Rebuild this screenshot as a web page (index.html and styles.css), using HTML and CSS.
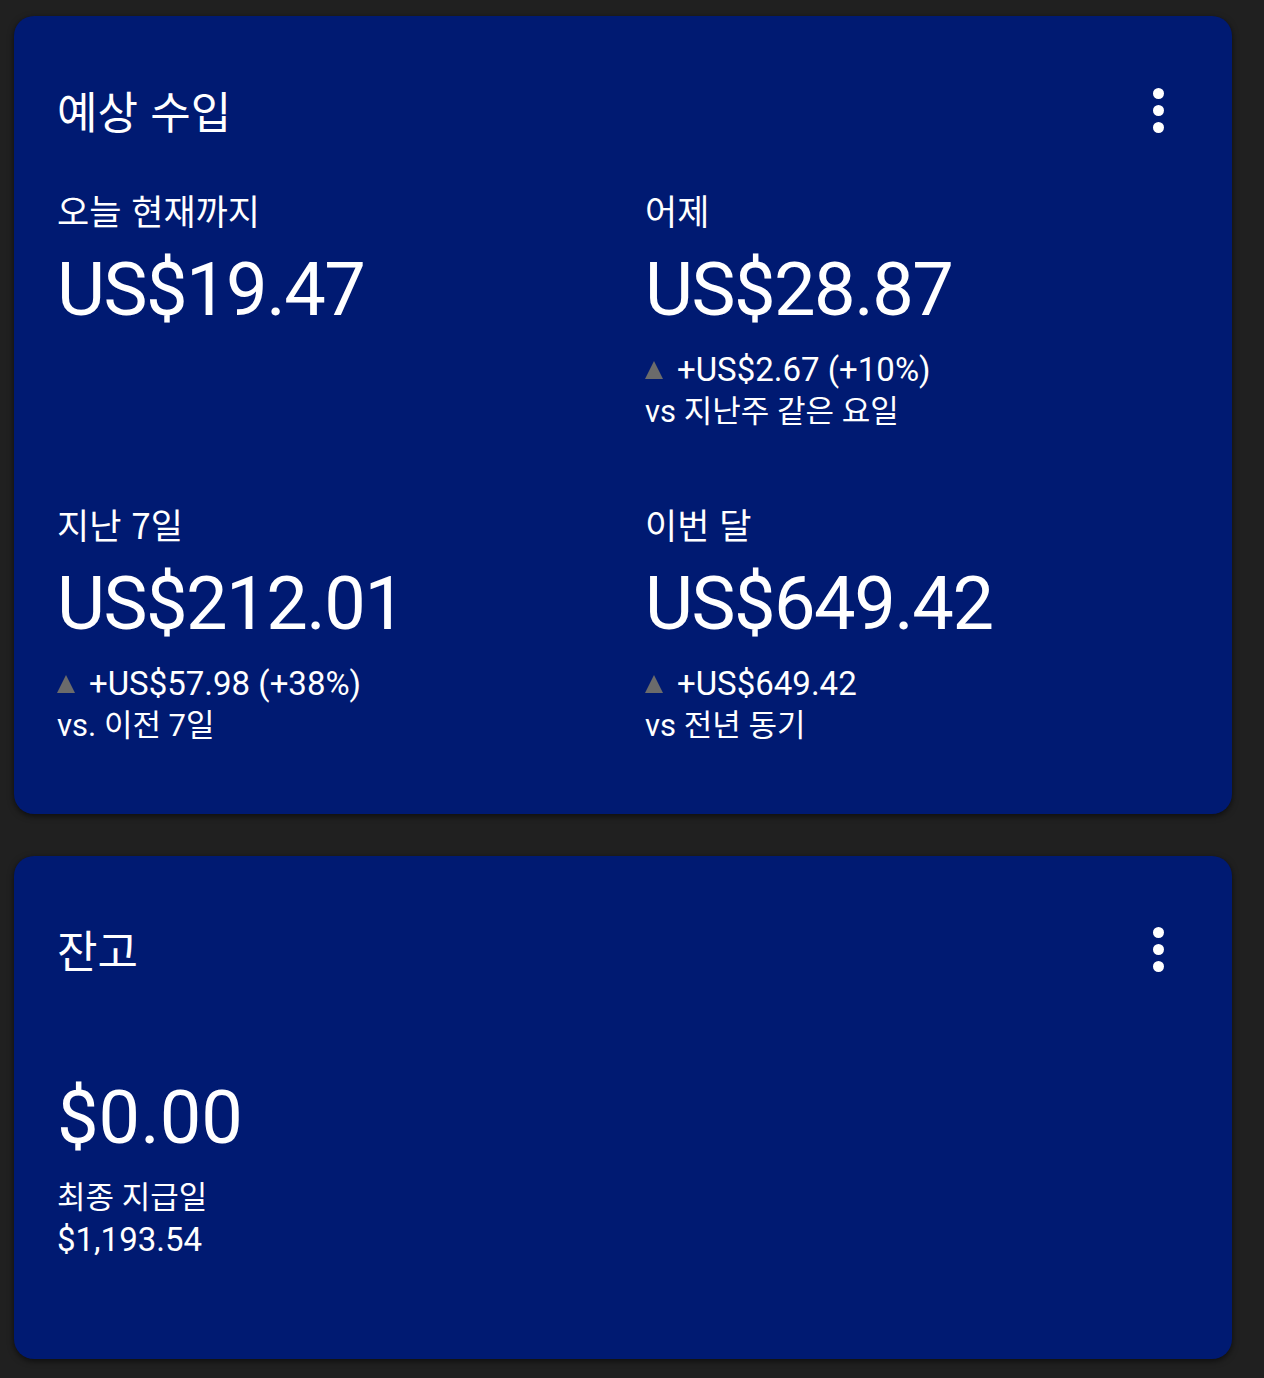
FILE: index.html
```html
<!DOCTYPE html>
<html lang="ko">
<head>
  <meta charset="UTF-8" />
  <meta name="viewport" content="width=device-width, initial-scale=1.0" />
  <title>수입</title>
  <link rel="stylesheet" href="styles.css">
</head>
<body>
  <div class="card">
    <div class="card-header">
      <h2>예상 수입</h2>
      <div class="more"><span></span><span></span><span></span></div>
    </div>
    <div class="stats">
      <div class="stat">
        <div class="label">오늘 현재까지</div>
        <div class="amount">US$19.47</div>
      </div>
      <div class="stat">
        <div class="label">어제</div>
        <div class="amount">US$28.87</div>
        <div class="change"><span class="up"></span>+US$2.67 (+10%)</div>
        <div class="compare">vs 지난주 같은 요일</div>
      </div>
      <div class="stat">
        <div class="label">지난 7일</div>
        <div class="amount">US$212.01</div>
        <div class="change"><span class="up"></span>+US$57.98 (+38%)</div>
        <div class="compare">vs. 이전 7일</div>
      </div>
      <div class="stat">
        <div class="label">이번 달</div>
        <div class="amount">US$649.42</div>
        <div class="change"><span class="up"></span>+US$649.42</div>
        <div class="compare">vs 전년 동기</div>
      </div>
    </div>
  </div>

  <div class="card balance">
    <div class="card-header">
      <h2>잔고</h2>
      <div class="more"><span></span><span></span><span></span></div>
    </div>
    <div class="amount">$0.00</div>
    <div class="compare">최종 지급일</div>
    <div class="paid">$1,193.54</div>
  </div>
</body>
</html>
```

FILE: styles.css
```css
* {
  box-sizing: border-box;
}

body {
  margin: 0;
  padding: 16px 32px 0 14px;
  background-color: #202020;
  font-family: Roboto, "Noto Sans CJK KR", sans-serif;
  color: #ffffff;
}

.card {
  background-color: #001a72;
  border-radius: 20px;
  padding: 64px 43px 67px 43px;
  box-shadow: 0 2px 6px rgba(0, 0, 0, 0.6);
  margin-bottom: 42px;
}

.card-header {
  display: flex;
  justify-content: space-between;
  align-items: center;
}

.card-header h2 {
  margin: 0;
  font-family: "Noto Sans CJK KR", sans-serif;
  font-size: 44px;
  font-weight: 400;
  line-height: 60px;
}

.more {
  display: flex;
  flex-direction: column;
  align-items: center;
  gap: 6px;
  margin-right: 25px;
}

.more span {
  width: 11px;
  height: 11px;
  border-radius: 50%;
  background-color: #ffffff;
}

.stats {
  display: grid;
  grid-template-columns: 588px 1fr;
  row-gap: 69px;
  margin-top: 48px;
}

.label {
  font-family: "Noto Sans CJK KR", sans-serif;
  font-size: 35px;
  line-height: 44px;
}

.amount {
  font-size: 74px;
  line-height: 90px;
  margin-top: 13px;
  letter-spacing: -1.5px;
}

.change,
.compare,
.paid {
  font-size: 33px;
  line-height: 42px;
}

.compare {
  font-size: 31px;
}

.change {
  margin-top: 14px;
  display: flex;
  align-items: center;
}

.up {
  width: 0;
  height: 0;
  border-left: 9px solid transparent;
  border-right: 9px solid transparent;
  border-bottom: 18px solid #6b6b6b;
  margin-right: 14px;
}

.balance {
  padding-top: 63px;
  padding-bottom: 98px;
}

.balance .amount {
  margin-top: 94px;
  margin-bottom: 14px;
  letter-spacing: 0;
}
```
